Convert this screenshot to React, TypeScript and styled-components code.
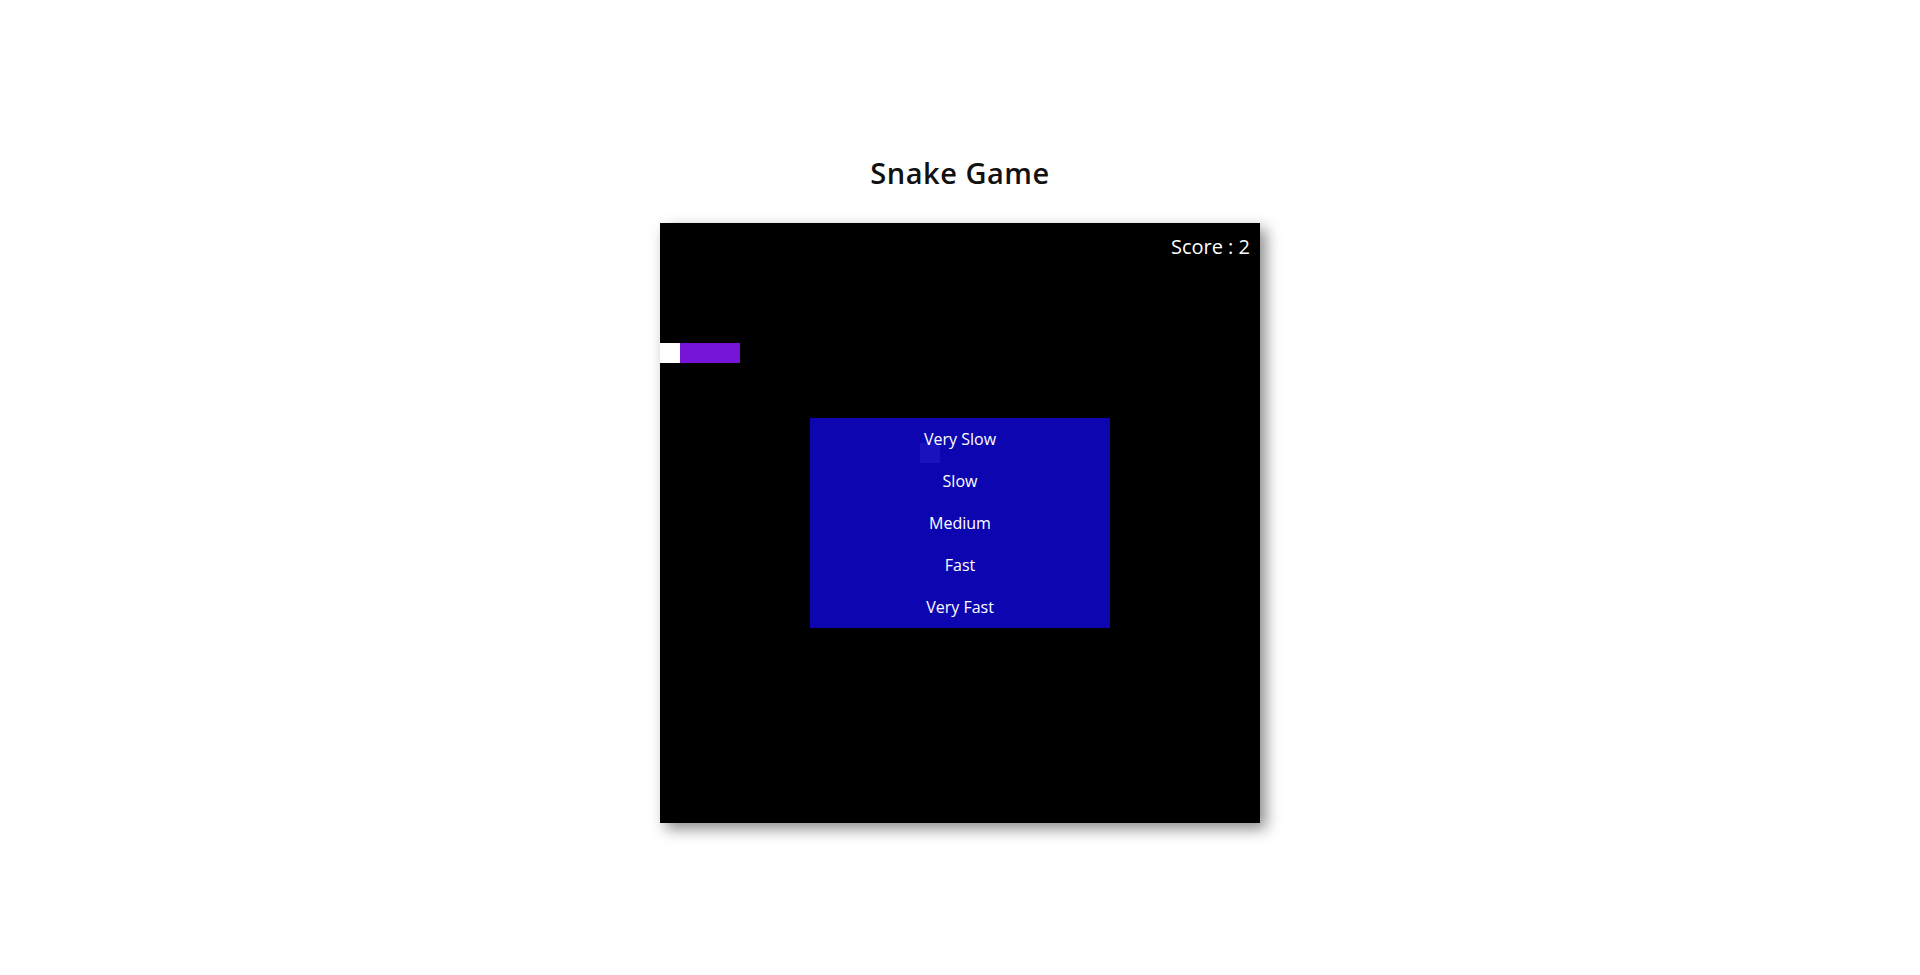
import React from "react";
import styled, { createGlobalStyle } from "styled-components";

const GlobalStyle = createGlobalStyle`
  html, body {
    margin: 0;
    padding: 0;
    background: #ffffff;
    font-family: "Open Sans", "Noto Sans", sans-serif;
  }
`;

const Page = styled.main`
  display: flex;
  flex-direction: column;
  align-items: center;
  gap: 31px;
  padding-top: 154px;
  min-height: 975px;
  box-sizing: border-box;
`;

const Title = styled.h1`
  margin: 0;
  font-size: 29px;
  line-height: 38px;
  font-weight: 600;
  letter-spacing: 0.5px;
  color: #111111;
`;

const Board = styled.div`
  position: relative;
  width: 600px;
  height: 600px;
  background: #000000;
  box-shadow: 6px 6px 14px rgba(0, 0, 0, 0.45);
  display: flex;
  align-items: center;
  justify-content: center;
`;

const Score = styled.div`
  position: absolute;
  top: 10px;
  right: 10px;
  color: #ffffff;
  font-size: 20px;
  line-height: 27px;
`;

const Cell = styled.div<{ $color: string }>`
  position: absolute;
  width: 20px;
  height: 20px;
  background: ${(p) => p.$color};
`;

const Menu = styled.ul`
  position: relative;
  z-index: 2;
  list-style: none;
  margin: 0;
  padding: 0;
  width: 300px;
  display: flex;
  flex-direction: column;
  background: rgba(14, 6, 185, 0.95);
`;

const MenuItem = styled.li`
  height: 42px;
  display: flex;
  align-items: center;
  justify-content: center;
  color: #ffffff;
  font-size: 16px;
  cursor: pointer;
`;

const snake = [
  { x: 0, y: 6, head: true },
  { x: 1, y: 6 },
  { x: 2, y: 6 },
  { x: 3, y: 6 },
];

const food = { x: 13, y: 11 };

const speeds = ["Very Slow", "Slow", "Medium", "Fast", "Very Fast"];

export default function App() {
  return (
    <>
      <GlobalStyle />
      <Page>
        <Title>Snake Game</Title>
        <Board>
          <Score>Score : 2</Score>
          {snake.map((s, i) => (
            <Cell
              key={i}
              $color={s.head ? "#ffffff" : "#7615d8"}
              style={{ left: s.x * 20, top: s.y * 20 }}
            />
          ))}
          <Cell $color="#ffffff" style={{ left: food.x * 20, top: food.y * 20 }} />
          <Menu>
            {speeds.map((s) => (
              <MenuItem key={s}>{s}</MenuItem>
            ))}
          </Menu>
        </Board>
      </Page>
    </>
  );
}
